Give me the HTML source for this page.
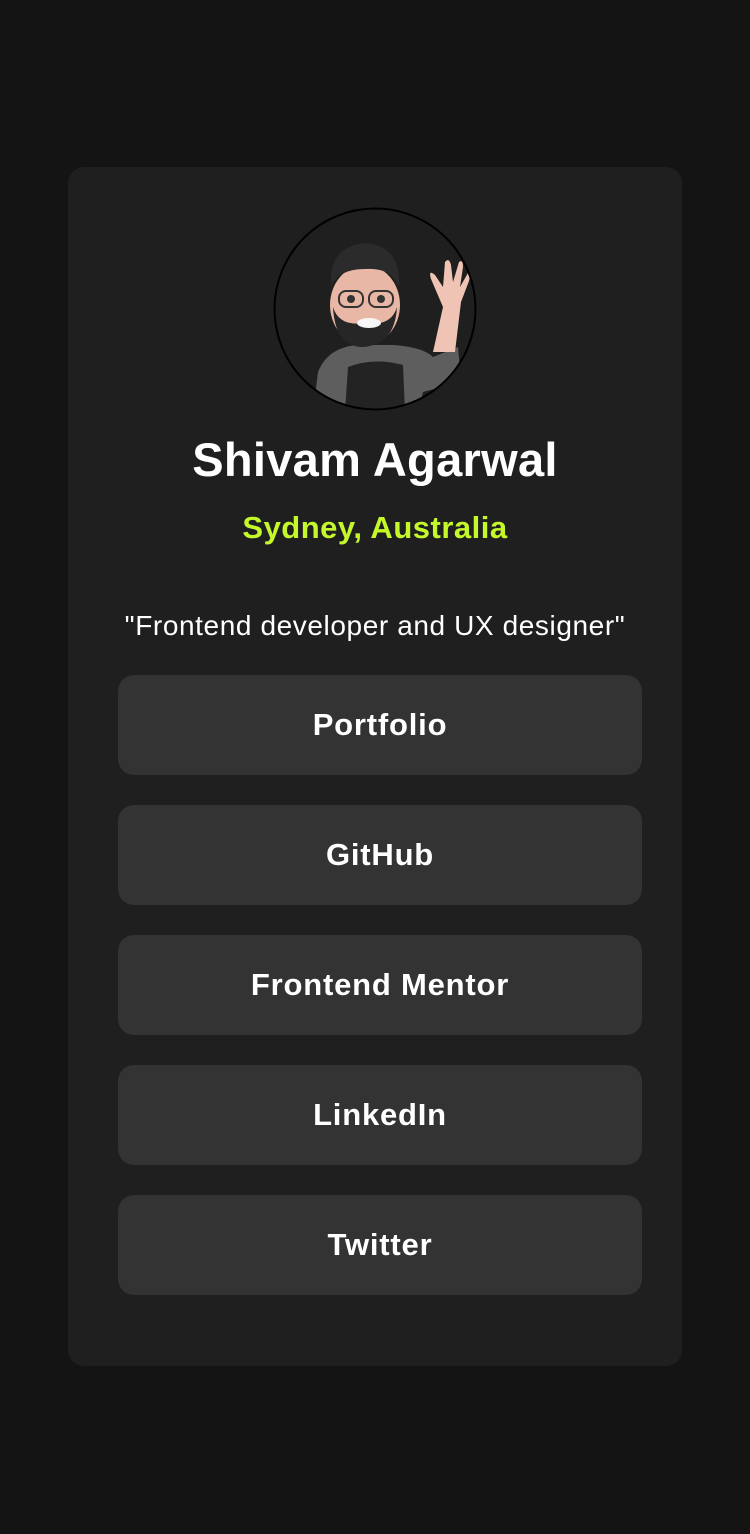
<!DOCTYPE html>
<html><head><meta charset="utf-8"><style>
*{margin:0;padding:0;box-sizing:border-box}
body{width:750px;height:1534px;background:#141414;font-family:"Liberation Sans",sans-serif;color:#fff;position:relative}
.card{position:absolute;left:68px;top:167px;width:614px;height:1199px;background:#1f1f1f;border-radius:16px}
.av{position:absolute;left:273px;top:207px;width:204px;height:204px}
.name{position:absolute;top:432px;left:0;width:750px;text-align:center;font-size:47px;font-weight:600;letter-spacing:0.3px}
.loc{position:absolute;top:510px;left:0;width:750px;text-align:center;font-size:31px;font-weight:bold;color:#c4f82a;letter-spacing:0.5px}
.quote{position:absolute;top:610px;left:0;width:750px;text-align:center;font-size:28px;letter-spacing:0.6px}
.btn{position:absolute;left:118px;width:524px;height:100px;background:#333;border-radius:16px;text-align:center;line-height:100px;font-size:31px;font-weight:bold;letter-spacing:0.8px}
</style></head><body>
<div class="card"></div>
<svg class="av" viewBox="0 0 204 204">
<defs><clipPath id="c"><circle cx="102" cy="102" r="100"/></clipPath></defs>
<circle cx="102" cy="102" r="100" fill="#1f1f1f"/>
<g clip-path="url(#c)">
<path d="M40 205 L45 165 Q55 140 85 138 L120 138 Q150 140 160 150 L185 140 L188 175 L150 185 L145 205Z" fill="#5e5e5e"/>
<path d="M72 205 L75 160 Q100 150 130 158 L132 205Z" fill="#232323"/>
<path d="M160 145 L170 100 L158 72 Q155 62 162 68 L170 80 L172 55 Q176 50 178 58 L180 75 L186 55 Q190 52 190 60 L187 80 L195 66 Q198 66 196 74 L188 95 L182 145Z" fill="#f0c4b4"/>
<ellipse cx="92" cy="98" rx="35" ry="40" fill="#e9b7a6"/>
<path d="M58 80 Q55 40 92 36 Q128 38 126 80 Q118 60 92 62 Q65 62 58 80Z" fill="#2b2b2b"/>
<path d="M60 100 Q62 140 90 140 Q122 138 124 100 Q118 120 92 116 Q66 120 60 100Z" fill="#262626"/>
<ellipse cx="96" cy="116" rx="12" ry="5" fill="#f7f7f7"/>
<rect x="66" y="84" width="24" height="16" rx="7" fill="none" stroke="#333" stroke-width="2"/>
<rect x="96" y="84" width="24" height="16" rx="7" fill="none" stroke="#333" stroke-width="2"/>
<circle cx="78" cy="92" r="4" fill="#333"/><circle cx="108" cy="92" r="4" fill="#333"/>
</g>
<circle cx="102" cy="102" r="100.5" fill="none" stroke="#000" stroke-width="2"/>
</svg>
<div class="name">Shivam Agarwal</div>
<div class="loc">Sydney, Australia</div>
<div class="quote">"Frontend developer and UX designer"</div>
<div class="btn" style="top:675px">Portfolio</div>
<div class="btn" style="top:805px">GitHub</div>
<div class="btn" style="top:935px">Frontend Mentor</div>
<div class="btn" style="top:1065px">LinkedIn</div>
<div class="btn" style="top:1195px">Twitter</div>
</body></html>
